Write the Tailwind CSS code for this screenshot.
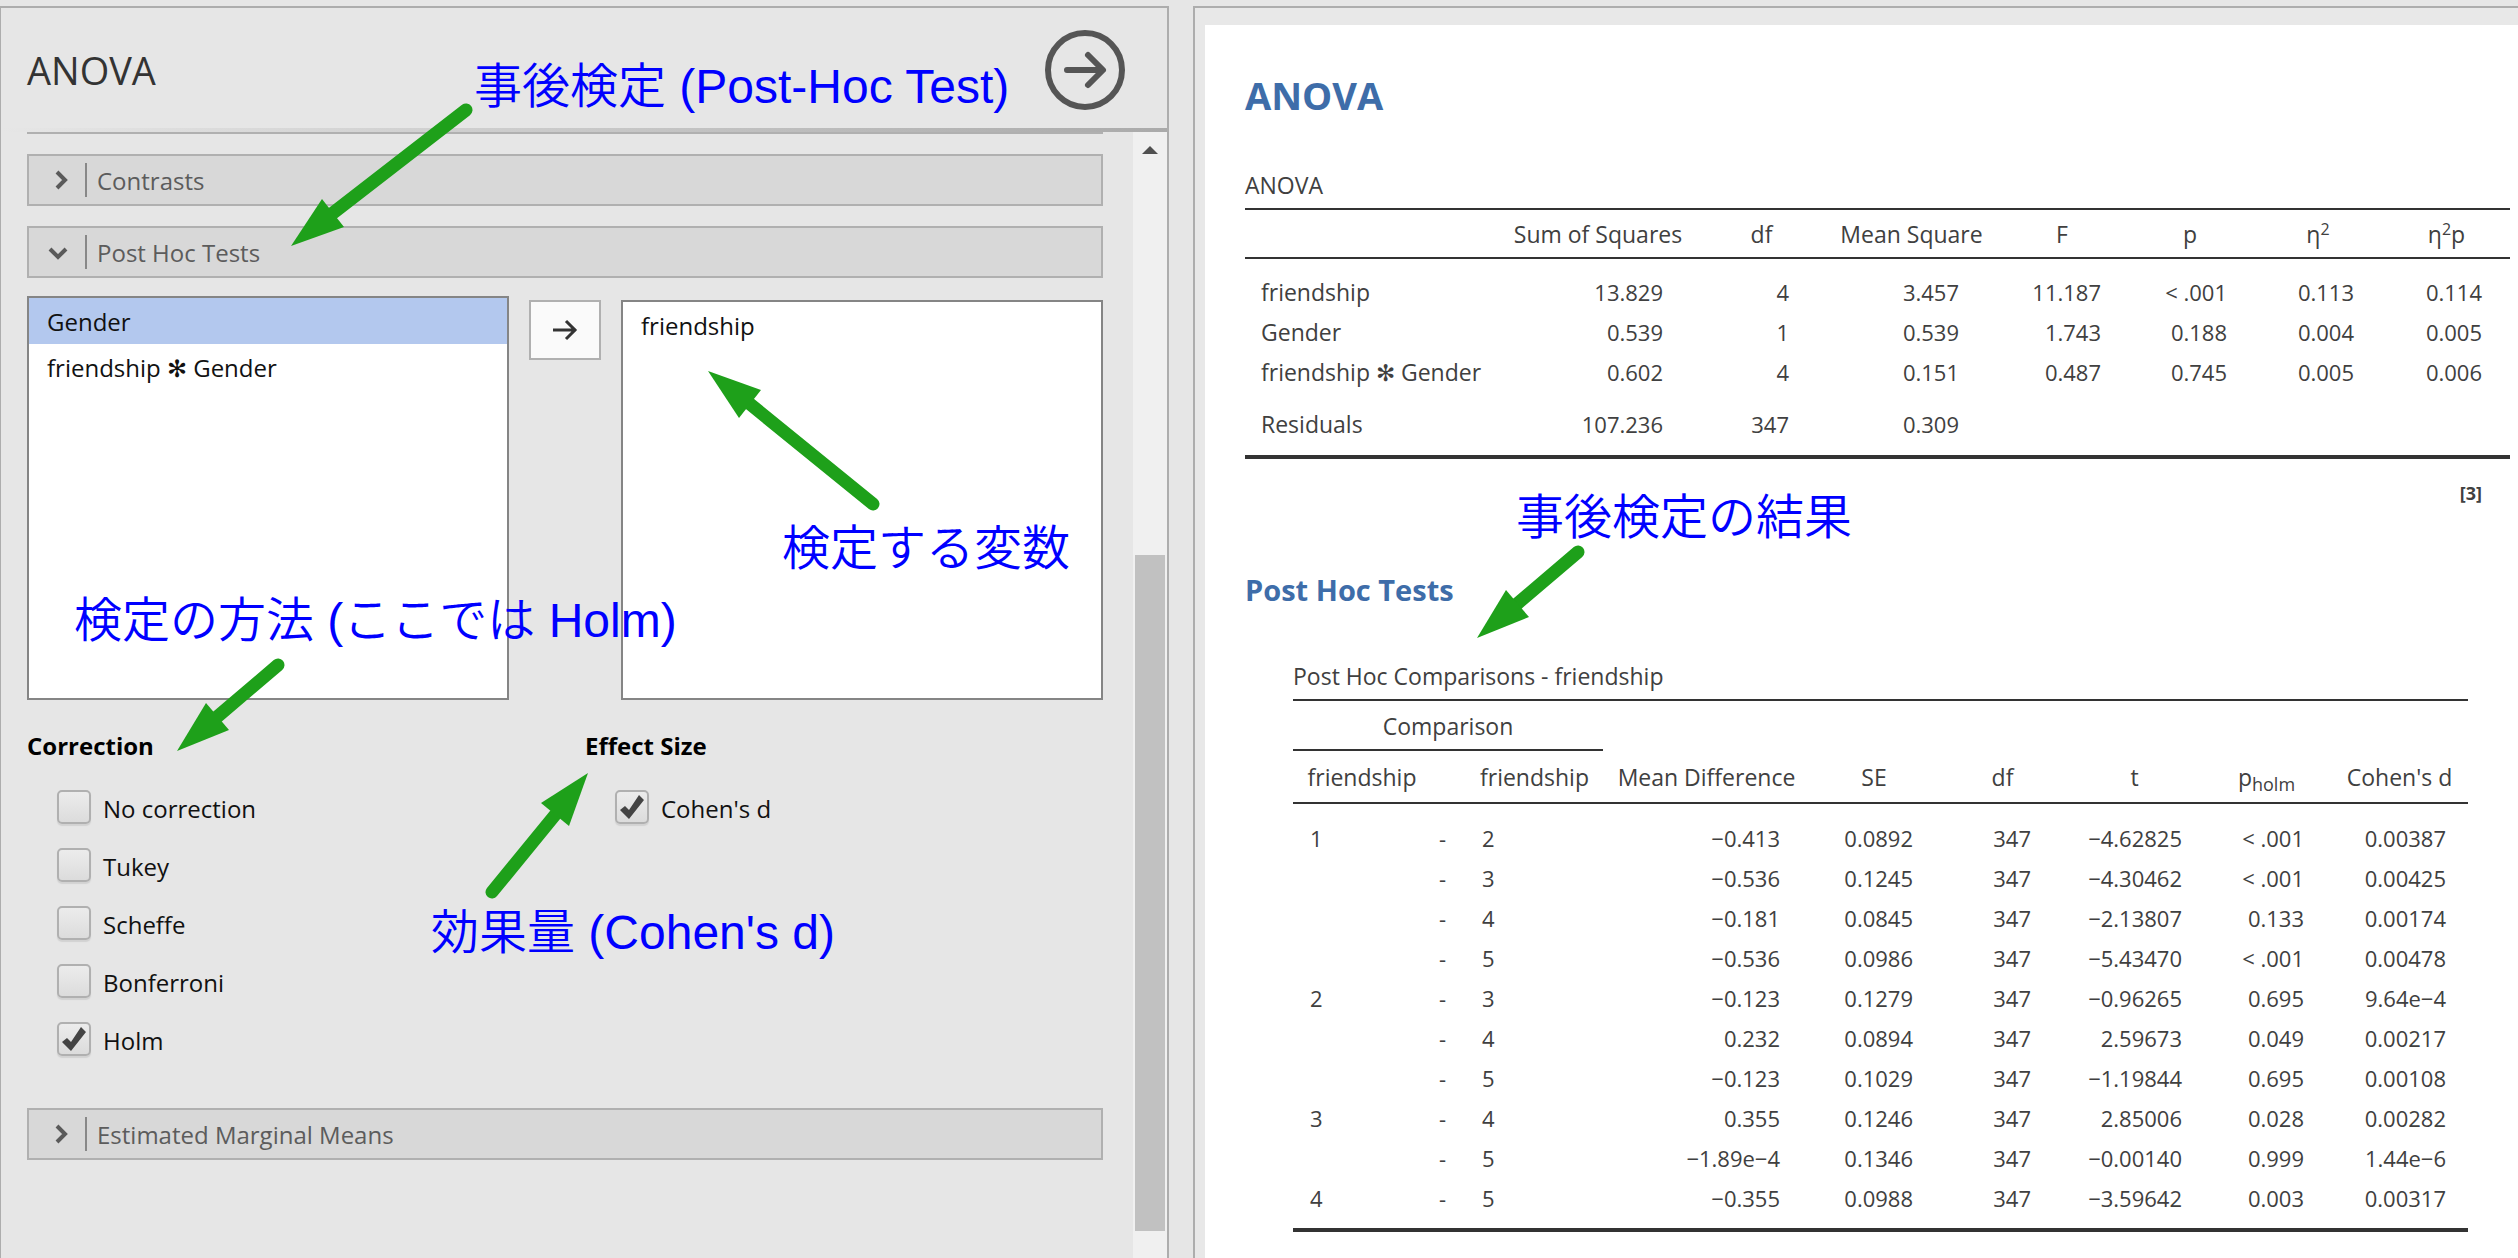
<!DOCTYPE html>
<html lang="ja">
<head>
<meta charset="utf-8">
<title>ANOVA</title>
<script src="https://cdn.jsdelivr.net/npm/@tailwindcss/browser@4"></script>
</head>
<body class="relative min-h-screen overflow-x-hidden bg-[#e6e6e6] font-['Open_Sans','Noto_Sans','Noto_Sans_CJK_JP',sans-serif] text-2xl text-[#111]">
<main class="grid min-h-screen grid-cols-[1169fr_1325fr] gap-6 pt-1.5">

  <!-- Options panel -->
  <section class="flex flex-col border-t-2 border-r-2 border-l border-[#adadad]" aria-label="Options">
    <header class="flex h-[120px] items-center justify-between pt-1 pr-[42px] pl-[26px]">
      <h1 class="text-[38px] text-[#333]">ANOVA</h1>
      <button type="button" aria-label="Hide options" class="size-20">
        <svg viewBox="0 0 80 80" fill="none" stroke="#555" stroke-width="6" stroke-linecap="round" stroke-linejoin="round"><circle cx="40" cy="40" r="37"/><path d="M22 40H57M43 25L58 40L43 55"/></svg>
      </button>
    </header>
    <div class="h-1 bg-linear-to-r from-transparent to-[#aaa]"></div>
    <div class="flex grow">
      <div class="flex grow flex-col pr-[30px] pl-[26px]">
        <div class="h-0.5 bg-[#b0b0b0]"></div>
        <button type="button" class="mt-5 flex h-[52px] items-center border-2 border-[#b0b0b0] bg-[#d8d8d8] pl-6 text-left text-[#5c5c5c]">
          <svg class="size-5" viewBox="0 0 20 20" fill="none" stroke="#5a5a5a" stroke-width="4"><path d="M4 2L12 10L4 18"/></svg>
          <span class="ml-3 h-[34px] w-0.5 bg-[#888]"></span><span class="ml-2.5 pt-0.5">Contrasts</span>
        </button>
        <button type="button" class="mt-5 flex h-[52px] items-center border-2 border-[#b0b0b0] bg-[#d8d8d8] pl-[19px] text-left text-[#5c5c5c]">
          <svg class="mr-[5px] size-5" viewBox="0 0 20 20" fill="none" stroke="#5a5a5a" stroke-width="4"><path d="M2 7L10 15L18 7"/></svg>
          <span class="ml-3 h-[34px] w-0.5 bg-[#888]"></span><span class="ml-2.5 pt-0.5">Post Hoc Tests</span>
        </button>

        <div class="mt-[18px] flex h-[404px] items-start">
          <ul class="h-full flex-1 border-2 border-[#858585] bg-white leading-12">
            <li class="h-[46px] bg-[#b3c8ee] pl-[18px]">Gender</li>
            <li class="h-[46px] pl-[18px]">friendship ✻ Gender</li>
          </ul>
          <button type="button" aria-label="Add" class="mx-5 mt-1 flex h-[60px] w-[72px] items-center justify-center border-2 border-[#b0b0b0] bg-[#fafafa]">
            <svg class="size-7" viewBox="0 0 28 28" fill="none" stroke="#333" stroke-width="3"><path d="M2 14H25M15 5L24 14L15 23"/></svg>
          </button>
          <ul class="mt-1 h-[400px] flex-1 border-2 border-[#858585] bg-white leading-12">
            <li class="h-[46px] pl-[18px]">friendship</li>
          </ul>
        </div>

        <div class="mt-7 grid grid-cols-[558fr_518fr]">
          <fieldset>
            <legend class="font-bold leading-9 text-black">Correction</legend>
            <div class="mt-[26px] ml-[30px] flex flex-col gap-6">
              <label class="flex h-[34px] items-center gap-3"><span class="relative size-[34px]"><input type="checkbox" class="peer block size-full appearance-none rounded-[5px] border-2 border-[#b0b0b0] bg-linear-to-b from-[#ececec] to-[#dcdcdc] shadow-[0_2px_1px_#d2d2d2]"></span><span class="pt-1">No correction</span></label>
              <label class="flex h-[34px] items-center gap-3"><span class="relative size-[34px]"><input type="checkbox" class="peer block size-full appearance-none rounded-[5px] border-2 border-[#b0b0b0] bg-linear-to-b from-[#ececec] to-[#dcdcdc] shadow-[0_2px_1px_#d2d2d2]"></span><span class="pt-1">Tukey</span></label>
              <label class="flex h-[34px] items-center gap-3"><span class="relative size-[34px]"><input type="checkbox" class="peer block size-full appearance-none rounded-[5px] border-2 border-[#b0b0b0] bg-linear-to-b from-[#ececec] to-[#dcdcdc] shadow-[0_2px_1px_#d2d2d2]"></span><span class="pt-1">Scheffe</span></label>
              <label class="flex h-[34px] items-center gap-3"><span class="relative size-[34px]"><input type="checkbox" class="peer block size-full appearance-none rounded-[5px] border-2 border-[#b0b0b0] bg-linear-to-b from-[#ececec] to-[#dcdcdc] shadow-[0_2px_1px_#d2d2d2]"></span><span class="pt-1">Bonferroni</span></label>
              <label class="flex h-[34px] items-center gap-3"><span class="relative size-[34px]"><input type="checkbox" checked class="peer block size-full appearance-none rounded-[5px] border-2 border-[#b0b0b0] bg-linear-to-b from-[#ececec] to-[#dcdcdc] shadow-[0_2px_1px_#d2d2d2]"><svg class="pointer-events-none absolute inset-0 hidden peer-checked:block" viewBox="0 0 34 34" fill="#444"><path d="M5 20L10 16L14 20L24 5L29 10L14 29Z"/></svg></span><span class="pt-1">Holm</span></label>
            </div>
          </fieldset>
          <fieldset>
            <legend class="font-bold leading-9 text-black">Effect Size</legend>
            <div class="mt-[26px] ml-[30px] flex flex-col">
              <label class="flex h-[34px] items-center gap-3"><span class="relative size-[34px]"><input type="checkbox" checked class="peer block size-full appearance-none rounded-[5px] border-2 border-[#b0b0b0] bg-linear-to-b from-[#ececec] to-[#dcdcdc] shadow-[0_2px_1px_#d2d2d2]"><svg class="pointer-events-none absolute inset-0 hidden peer-checked:block" viewBox="0 0 34 34" fill="#444"><path d="M5 20L10 16L14 20L24 5L29 10L14 29Z"/></svg></span><span class="pt-1">Cohen's d</span></label>
            </div>
          </fieldset>
        </div>

        <button type="button" class="mt-[52px] flex h-[52px] items-center border-2 border-[#b0b0b0] bg-[#d8d8d8] pl-6 text-left text-[#5c5c5c]">
          <svg class="size-5" viewBox="0 0 20 20" fill="none" stroke="#5a5a5a" stroke-width="4"><path d="M4 2L12 10L4 18"/></svg>
          <span class="ml-3 h-[34px] w-0.5 bg-[#888]"></span><span class="ml-2.5 pt-0.5">Estimated Marginal Means</span>
        </button>
      </div>
      <div class="flex w-[34px] shrink-0 flex-col items-center bg-[#f0f0f0] pt-3.5 pb-[27px]">
        <svg class="h-2 w-4" viewBox="0 0 16 8" fill="#505050"><path d="M0 8L8 0L16 8Z"/></svg>
        <div class="mt-[401px] w-[30px] grow bg-[#c1c1c1]"></div>
      </div>
    </div>
  </section>

  <!-- Results panel -->
  <section class="flex border-t-2 border-l-2 border-[#adadad] bg-[#e8e8e8] pt-[17px] pl-2.5" aria-label="Results">
    <div class="grow bg-white pr-2 pl-10 text-[#404040]">
      <h2 class="mt-11 text-[38px] font-bold leading-[52px] text-[#3e6da9]">ANOVA</h2>
      <table class="mt-11 w-full table-fixed border-separate border-spacing-0 text-right text-[22px] leading-10 [&_td:nth-child(2)]:pr-[34px] [&_td:nth-child(3)]:pr-[37px] [&_td:nth-child(4)]:pr-[38px] [&_td:nth-child(5)]:pr-[26px] [&_td:nth-child(6)]:pr-[26px] [&_td:nth-child(7)]:pr-[29px] [&_td:nth-child(8)]:pr-7">
        <caption class="pb-[3px] text-left text-[23px] leading-10">ANOVA</caption>
        <colgroup><col><col class="w-[198px]"><col class="w-[129px]"><col class="w-[171px]"><col class="w-[130px]"><col class="w-[126px]"><col class="w-[130px]"><col class="w-[127px]"></colgroup>
        <thead class="text-center text-[23px] leading-[45px] [&_th]:border-y-2 [&_th]:border-[#333] [&_th]:pt-0.5 [&_th]:font-normal">
          <tr><th></th><th>Sum of Squares</th><th>df</th><th>Mean Square</th><th>F</th><th>p</th><th>η<sup class="text-base">2</sup></th><th>η<sup class="text-base">2</sup>p</th></tr>
        </thead>
        <tbody class="[&_th]:pl-4 [&_th]:text-left [&_th]:text-[23px] [&_th]:font-normal [&_tr:first-child>*]:pt-[13px] [&_tr:last-child>*]:border-b-4 [&_tr:last-child>*]:border-[#333] [&_tr:last-child>*]:pt-3 [&_tr:last-child>*]:pb-[11px]">
          <tr><th scope="row">friendship</th><td>13.829</td><td>4</td><td>3.457</td><td>11.187</td><td>&lt; .001</td><td>0.113</td><td>0.114</td></tr>
          <tr><th scope="row">Gender</th><td>0.539</td><td>1</td><td>0.539</td><td>1.743</td><td>0.188</td><td>0.004</td><td>0.005</td></tr>
          <tr><th scope="row">friendship ✻ Gender</th><td>0.602</td><td>4</td><td>0.151</td><td>0.487</td><td>0.745</td><td>0.005</td><td>0.006</td></tr>
          <tr><th scope="row">Residuals</th><td>107.236</td><td>347</td><td>0.309</td><td></td><td></td><td></td><td></td></tr>
        </tbody>
      </table>
      <p class="mt-[18px] pr-7 text-right text-lg font-bold leading-8">[3]</p>
      <h3 class="mt-[58px] text-[29px] font-bold leading-[46px] text-[#3e6da9]">Post Hoc Tests</h3>
      <div class="mt-[43px] pr-[42px] pl-12">
        <table class="w-full table-fixed border-separate border-spacing-0 text-right text-[22px] leading-10 [&_td:nth-child(1)]:pl-[17px] [&_td:nth-child(1)]:text-left [&_td:nth-child(2)]:pl-2 [&_td:nth-child(2)]:text-left [&_td:nth-child(3)]:pl-4 [&_td:nth-child(3)]:text-left [&_td:nth-child(4)]:pr-[30px] [&_td:nth-child(5)]:pr-[25px] [&_td:nth-child(6)]:pr-9 [&_td:nth-child(7)]:pr-5 [&_td:nth-child(8)]:pr-[27px] [&_td:nth-child(9)]:pr-[22px]">
          <caption class="pb-[3px] text-left text-[23px] leading-10">Post Hoc Comparisons - friendship</caption>
          <colgroup><col class="w-[138px]"><col class="w-[35px]"><col class="w-[137px]"><col><col class="w-[128px]"><col class="w-[129px]"><col class="w-[135px]"><col class="w-[129px]"><col class="w-[137px]"></colgroup>
          <thead class="text-center text-[23px] [&_th]:border-[#333] [&_th]:pt-0.5 [&_th]:font-normal">
            <tr class="leading-[46px] [&_th]:border-t-2"><th colspan="3" class="border-b-2">Comparison</th><th colspan="6"></th></tr>
            <tr class="leading-[49px] [&_th]:border-b-2"><th>friendship</th><th></th><th>friendship</th><th>Mean Difference</th><th>SE</th><th>df</th><th>t</th><th>p<sub class="text-lg">holm</sub></th><th>Cohen's d</th></tr>
          </thead>
          <tbody class="[&_tr:first-child>td]:pt-3.5 [&_tr:last-child>td]:border-b-4 [&_tr:last-child>td]:border-[#333] [&_tr:last-child>td]:pb-2.5">
            <tr><td>1</td><td>-</td><td>2</td><td>−0.413</td><td>0.0892</td><td>347</td><td>−4.62825</td><td>&lt; .001</td><td>0.00387</td></tr>
            <tr><td></td><td>-</td><td>3</td><td>−0.536</td><td>0.1245</td><td>347</td><td>−4.30462</td><td>&lt; .001</td><td>0.00425</td></tr>
            <tr><td></td><td>-</td><td>4</td><td>−0.181</td><td>0.0845</td><td>347</td><td>−2.13807</td><td>0.133</td><td>0.00174</td></tr>
            <tr><td></td><td>-</td><td>5</td><td>−0.536</td><td>0.0986</td><td>347</td><td>−5.43470</td><td>&lt; .001</td><td>0.00478</td></tr>
            <tr><td>2</td><td>-</td><td>3</td><td>−0.123</td><td>0.1279</td><td>347</td><td>−0.96265</td><td>0.695</td><td>9.64e−4</td></tr>
            <tr><td></td><td>-</td><td>4</td><td>0.232</td><td>0.0894</td><td>347</td><td>2.59673</td><td>0.049</td><td>0.00217</td></tr>
            <tr><td></td><td>-</td><td>5</td><td>−0.123</td><td>0.1029</td><td>347</td><td>−1.19844</td><td>0.695</td><td>0.00108</td></tr>
            <tr><td>3</td><td>-</td><td>4</td><td>0.355</td><td>0.1246</td><td>347</td><td>2.85006</td><td>0.028</td><td>0.00282</td></tr>
            <tr><td></td><td>-</td><td>5</td><td>−1.89e−4</td><td>0.1346</td><td>347</td><td>−0.00140</td><td>0.999</td><td>1.44e−6</td></tr>
            <tr><td>4</td><td>-</td><td>5</td><td>−0.355</td><td>0.0988</td><td>347</td><td>−3.59642</td><td>0.003</td><td>0.00317</td></tr>
          </tbody>
        </table>
      </div>
    </div>
  </section>
</main>

<!-- Annotations over both panels -->
<div class="pointer-events-none absolute inset-0 overflow-hidden font-['Liberation_Sans','Noto_Sans_CJK_JP',sans-serif] text-5xl font-[350] leading-[60px] whitespace-nowrap text-[#0000ff]">
  <svg class="absolute top-0 left-0 h-[1258px] w-[2518px]" viewBox="0 0 2518 1258" fill="#1ea01a" stroke="#1ea01a">
    <g stroke-width="13" stroke-linecap="round"><path d="M466 110L333 213M873 504L750 404M278 665L217 717M492 892L555 815M1578 552L1517 604"/></g>
    <g stroke="none"><path d="M291 246L322 199L344 227Z"/><path d="M708 371L761 390L739 418Z"/><path d="M177 751L206 703L229 730Z"/><path d="M588 773L541 803L569 826Z"/><path d="M1477 638L1506 590L1529 617Z"/></g>
  </svg>
  <span class="absolute top-[57px] left-[474px]">事後検定 (Post-Hoc Test)</span>
  <span class="absolute top-[519px] left-[782px]">検定する変数</span>
  <span class="absolute top-[591px] left-[74px]">検定の方法 (ここでは Holm)</span>
  <span class="absolute top-[903px] left-[431px]">効果量 (Cohen's d)</span>
  <span class="absolute top-[488px] left-[1516px]">事後検定の結果</span>
</div>
</body>
</html>
